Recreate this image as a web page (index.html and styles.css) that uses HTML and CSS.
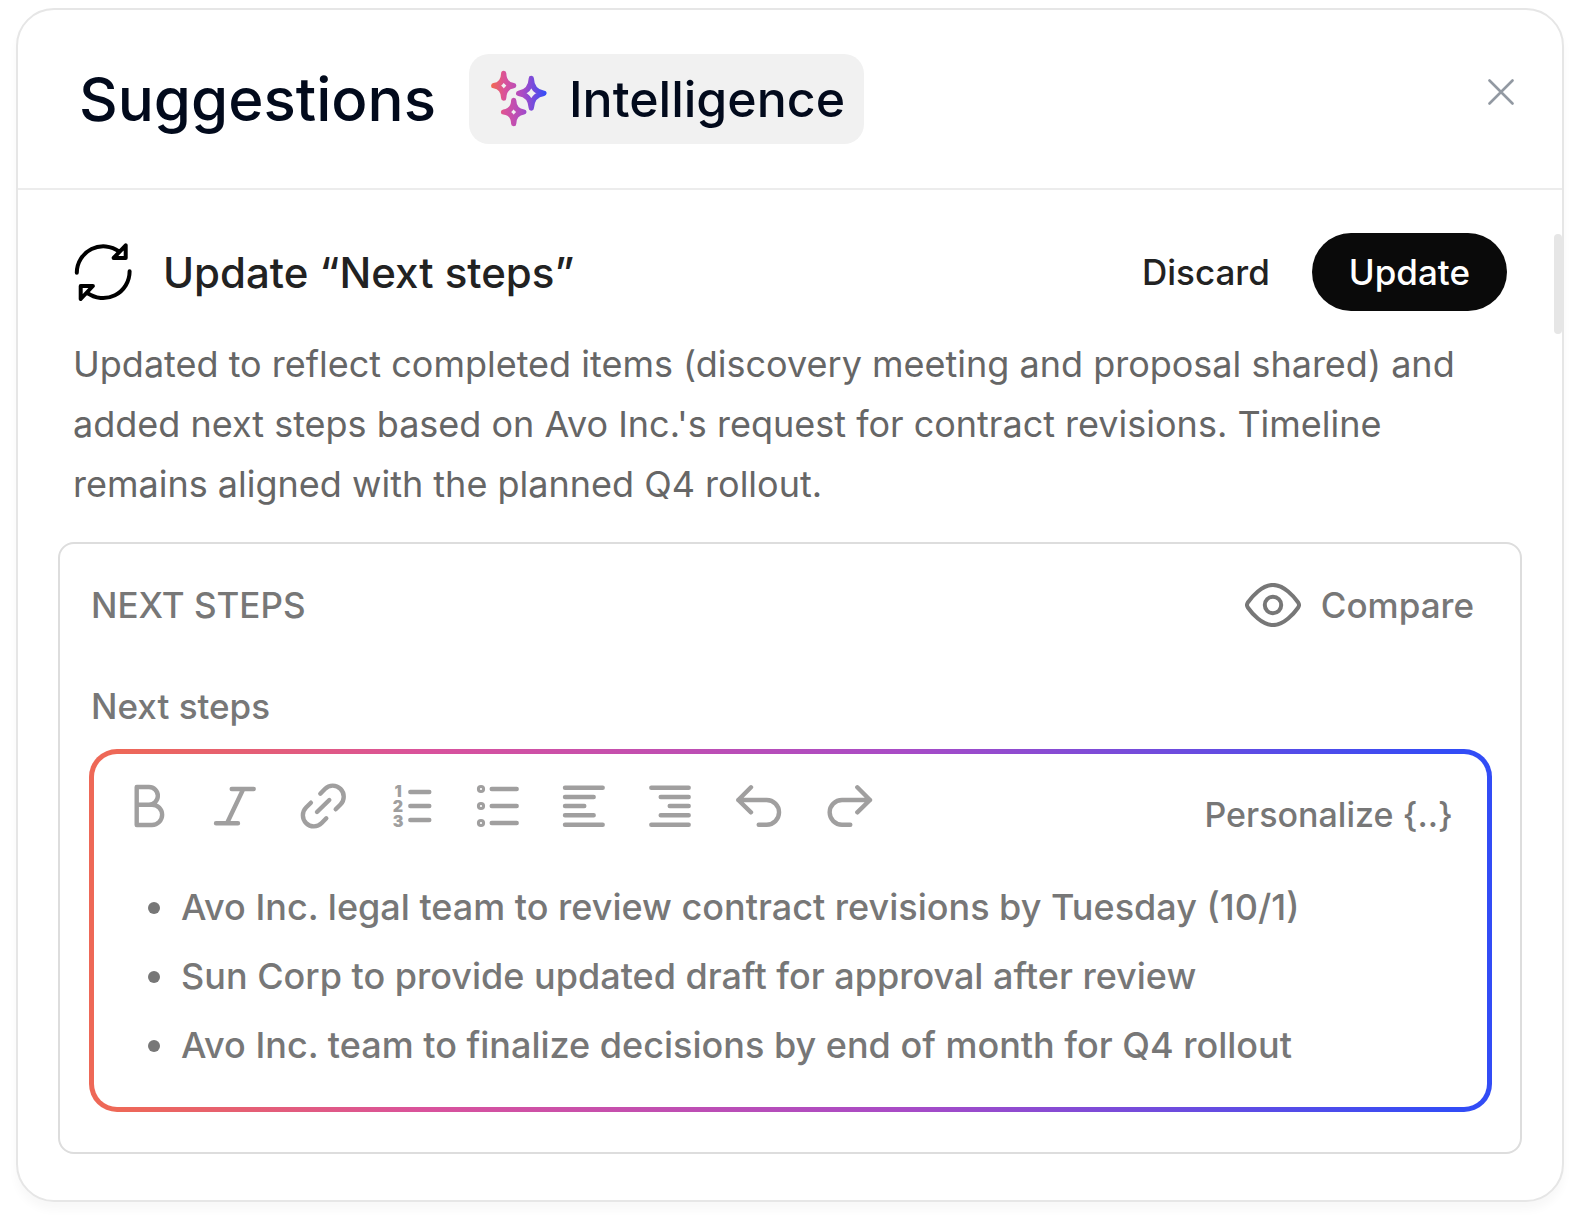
FILE: index.html
```html
<!DOCTYPE html>
<html lang="en">
<head>
<meta charset="utf-8">
<meta name="viewport" content="width=device-width, initial-scale=1">
<title>Suggestions</title>
<link rel="stylesheet" href="styles.css">
</head>
<body>
<main class="panel">
  <header class="panel-header">
    <h1 class="panel-title">Suggestions</h1>
    <span class="badge">
      <svg class="badge-icon" viewBox="0 0 58 58" aria-hidden="true">
        <defs>
          <linearGradient id="spark" gradientUnits="userSpaceOnUse" x1="1" y1="0" x2="57" y2="0">
            <stop offset="0" stop-color="#f26a50"/>
            <stop offset=".25" stop-color="#d9529c"/>
            <stop offset=".58" stop-color="#a84bc6"/>
            <stop offset="1" stop-color="#2f4dfa"/>
          </linearGradient>
        </defs>
        <g fill="none" stroke="url(#spark)" stroke-width="5.2" stroke-linejoin="round">
          <path d="M13.7 3.3C13.9 11 17.5 15 23.7 15.7C17.5 16.4 13.9 20.4 13.7 28.1C13.5 20.4 9.9 16.4 3.7 15.7C9.9 15 13.5 11 13.7 3.3Z"/>
          <path d="M41.3 8.4C41.7 17.5 46 22.3 54 23.3C46 24.3 41.7 29.1 41.3 38.2C40.9 29.1 36.6 24.3 28.6 23.3C36.6 22.3 40.9 17.5 41.3 8.4Z"/>
          <path d="M23.7 30.4C23.9 37.4 27.5 41.3 33.9 42C27.5 42.7 23.9 46.6 23.7 53.6C23.5 46.6 19.9 42.7 13.5 42C19.9 41.3 23.5 37.4 23.7 30.4Z"/>
        </g>
      </svg>
      Intelligence
    </span>
    <button class="close" type="button" aria-label="Close">
      <svg viewBox="0 0 26 26" aria-hidden="true"><path d="M1.5 1.5L24.5 24.5M24.5 1.5L1.5 24.5"/></svg>
    </button>
  </header>

  <div class="scroll-thumb"></div>

  <section class="suggestion">
    <div class="suggestion-head">
      <svg class="refresh" viewBox="0 0 58 58" aria-hidden="true">
        <path d="M2.8 29.7A26.5 26.5 0 0 1 45.3 8.7M51.7 2.3V15H39.6ZM55.6 28.3A26.5 26.5 0 0 1 13 49.6M6.7 56V43H18.9Z"/>
      </svg>
      <h2 class="suggestion-title">Update “Next steps”</h2>
      <button class="btn btn-text" type="button">Discard</button>
      <button class="btn btn-solid" type="button">Update</button>
    </div>
    <p class="summary">Updated to reflect completed items (discovery meeting and proposal shared) and added next steps based on Avo Inc.'s request for contract revisions. Timeline remains aligned with the planned Q4 rollout.</p>

    <div class="field-card">
      <div class="field-head">
        <h3 class="field-name">NEXT STEPS</h3>
        <button class="compare" type="button">
          <svg viewBox="0 0 56 44" aria-hidden="true">
            <path d="M2.8 19.5C7 13.5 17 1.9 28 1.9S49 13.5 53.2 19.5Q54.8 22 53.2 24.5C49 30.5 39 42.1 28 42.1S7 30.5 2.8 24.5Q1.2 22 2.8 19.5Z"/>
            <circle cx="28" cy="22" r="8.2"/>
          </svg>
          Compare
        </button>
      </div>
      <div class="field-label" id="steps-label">Next steps</div>
      <div class="editor">
        <div class="toolbar">
          <button class="tool" type="button" aria-label="Bold"><svg viewBox="0 0 56 48"><path d="M15.7 5H28A8.85 8.85 0 0 1 28 22.7H15.7M28 22.7H31A10.1 10.1 0 0 1 31 43H15.7V5"/></svg></button>
          <button class="tool" type="button" aria-label="Italic"><svg viewBox="0 0 56 48"><path d="M23.7 7H45.7M8 41.3H30M35.3 7L19 41.3"/></svg></button>
          <button class="tool" type="button" aria-label="Link"><svg viewBox="0 0 56 48"><path d="M25.3 11.7L29.9 6.9A11 11 0 0 1 45.5 22.5L40.7 27.3M31.3 36.3L26.7 41.1A11 11 0 0 1 11.1 25.5L15.9 20.7M22 30L34.3 18"/></svg></button>
          <button class="tool" type="button" aria-label="Numbered list"><svg viewBox="0 0 56 48"><path d="M28.3 10H47.3M28.3 24H47.3M28.3 38H47.3"/><g class="digits"><text x="16" y="15">1</text><text x="16" y="30">2</text><text x="16" y="45">3</text></g></svg></button>
          <button class="tool" type="button" aria-label="Bulleted list"><svg viewBox="0 0 56 48"><path d="M22.7 7H47.7M22.7 24H47.7M22.7 41H47.7"/><g stroke-width="3"><circle cx="12" cy="7" r="2.6"/><circle cx="12" cy="24" r="2.6"/><circle cx="12" cy="41" r="2.6"/></g></svg></button>
          <button class="tool" type="button" aria-label="Align left"><svg viewBox="0 0 56 48"><path d="M9 5.7H46.7M9 15H37.7M9 24H28.3M9 33.3H37.7M9 42.7H46.7"/></svg></button>
          <button class="tool" type="button" aria-label="Align right"><svg viewBox="0 0 56 48"><path d="M8.3 5.7H45.7M17.7 15H45.7M26.7 24H45.7M17.7 33.3H45.7M8.3 42.7H45.7"/></svg></button>
          <button class="tool" type="button" aria-label="Undo"><svg viewBox="0 0 56 48"><path d="M21 5.3L8.3 18L21 30.3M8.3 18H36.7A12.3 12.3 0 0 1 36.7 42.7H28.7"/></svg></button>
          <button class="tool" type="button" aria-label="Redo"><svg viewBox="0 0 56 48"><path d="M40.3 5.3L53 18L40.3 30.3M53 18H25A12.3 12.3 0 0 0 25 42.7H33.3"/></svg></button>
          <button class="personalize" type="button">Personalize {..}</button>
        </div>
        <ul class="steps" aria-labelledby="steps-label">
          <li>Avo Inc. legal team to review contract revisions by Tuesday (10/1)</li>
          <li>Sun Corp to provide updated draft for approval after review</li>
          <li>Avo Inc. team to finalize decisions by end of month for Q4 rollout</li>
        </ul>
      </div>
    </div>
  </section>
</main>
</body>
</html>
```
FILE: styles.css
```css
* {
  box-sizing: border-box;
}

body {
  margin: 0;
  padding: 8px 17px 25px 16px;
  background: #fff;
  font-family: Inter, "Liberation Sans", sans-serif;
  font-weight: 500;
  color: #777;
}

h1, h2, h3, p, ul {
  margin: 0;
  padding: 0;
  font-weight: inherit;
}

button {
  flex: none;
  padding: 0;
  border: 0;
  background: none;
  font: inherit;
  color: inherit;
  cursor: pointer;
}

svg {
  display: block;
  flex: none;
  fill: none;
  stroke: currentColor;
  stroke-linecap: round;
  stroke-linejoin: round;
}

.panel {
  position: relative;
  border: 2px solid #e6e6e6;
  border-radius: 38px;
  background: #fff;
  box-shadow: 0 8px 10px rgba(0, 0, 0, 0.03);
}

.panel-header {
  display: flex;
  align-items: flex-start;
  padding: 44px 37px 44px 61px;
  border-bottom: 2px solid #ececec;
  color: #020a1c;
}

.panel-title {
  margin-right: 33px;
  font-size: 60px;
  line-height: 90px;
}

.badge {
  display: flex;
  align-items: center;
  gap: 21px;
  height: 90px;
  padding: 0 19px 0 21px;
  border-radius: 20px;
  background: #f1f1f1;
  font-size: 50px;
}

.badge-icon {
  width: 58px;
  height: 58px;
}

.close {
  display: flex;
  align-items: center;
  justify-content: center;
  width: 48px;
  height: 76px;
  margin-left: auto;
  color: #9299a2;
}

.close svg {
  width: 26px;
  height: 26px;
  stroke-width: 2.6;
}

.scroll-thumb {
  position: absolute;
  top: 224px;
  right: 0;
  width: 8px;
  height: 100px;
  border-radius: 4px;
  background: #e6e6e6;
}

.suggestion {
  padding: 43px 40px 46px;
}

.suggestion-head {
  display: flex;
  align-items: center;
  padding: 0 15px 0 16px;
  color: #222;
}

.refresh {
  width: 58px;
  height: 58px;
  margin-right: 31px;
  color: #000;
  stroke-width: 4;
}

.suggestion-title {
  margin-right: auto;
  font-size: 42px;
}

.btn {
  height: 78px;
  font-size: 35px;
}

.btn-text {
  margin-right: 42px;
}

.btn-solid {
  padding: 0 37px;
  border-radius: 39px;
  background: #0a0a0a;
  color: #fff;
}

.summary {
  margin: 23px 0 28px;
  padding: 0 32px 0 15px;
  font-size: 36px;
  font-weight: 400;
  line-height: 60px;
  color: #666;
}

.field-card {
  padding: 39px 28px 40px 29px;
  border: 2px solid #ddd;
  border-radius: 16px;
}

.field-head {
  display: flex;
  align-items: center;
  justify-content: space-between;
  padding: 0 18px 0 2px;
}

.field-name,
.compare,
.field-label {
  font-size: 35px;
  line-height: 44px;
}

.compare {
  display: flex;
  align-items: center;
  gap: 20px;
}

.compare svg {
  width: 56px;
  height: 44px;
  stroke-width: 4;
}

.field-label {
  margin: 57px 0 21px;
  padding-left: 2px;
}

.editor {
  padding: 28px 34px 27px 27px;
  border: 5px solid transparent;
  border-radius: 28px;
  background:
    linear-gradient(#fff, #fff) padding-box,
    linear-gradient(90deg, #ee6857 2%, #d9529c 24%, #a84bc6 58%, #324cf6 97%) border-box;
}

.toolbar {
  display: flex;
  align-items: flex-start;
  gap: 31px;
}

.tool {
  color: #a09f9f;
}

.tool svg {
  width: 56px;
  height: 48px;
  stroke-width: 4.4;
}

.digits {
  fill: currentColor;
  stroke: none;
  font-size: 16px;
  font-weight: 900;
  text-anchor: middle;
}

.personalize {
  height: 64px;
  margin-left: auto;
  font-size: 34px;
}

.steps {
  margin-top: 27px;
  padding-left: 27px;
  list-style: none;
  font-size: 36px;
  line-height: 69px;
}

.steps li {
  display: flex;
  align-items: center;
  gap: 21px;
}

.steps li::before {
  content: "";
  flex: none;
  width: 12px;
  height: 12px;
  border-radius: 50%;
  background: currentColor;
}
```
